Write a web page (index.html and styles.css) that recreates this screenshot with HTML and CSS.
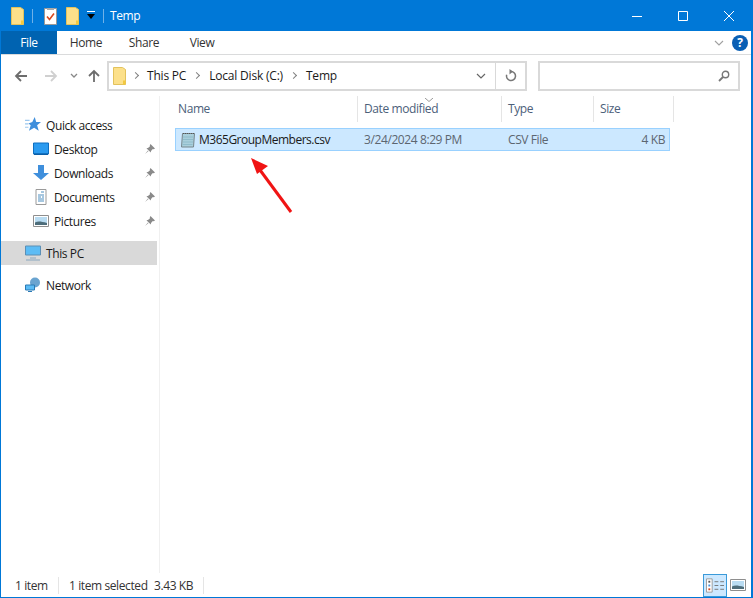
FILE: index.html
```html
<!DOCTYPE html>
<html lang="en">
<head>
  <meta charset="UTF-8">
  <title>Temp</title>
  <link rel="stylesheet" href="styles.css">
</head>
<body>
  <svg class="defs" width="0" height="0">
    <symbol id="folder" viewBox="0 0 13 18">
      <path d="M.5.5h9l3 2v15H.5z" fill="#fce08a" stroke="#e3c25c"/>
      <path d="M10 13.500h2.500v4H10z" fill="#f3c93f"/>
    </symbol>
    <symbol id="pin" viewBox="0 0 10 10">
      <path d="M5.500 0 10 4.500 8.800 5.200 7.800 5 6 7l-.2 1.600L1.400 4.200 3 4l2-1.800-.2-1z" fill="#8a8a8a"/>
      <path d="M3 6.500 0 10l3.500-3z" fill="#8a8a8a"/>
    </symbol>
    <symbol id="thumb" viewBox="0 0 16 12">
      <path d="M.5.500h15v11H.500z" fill="#fff" stroke="#8e8e8e"/>
      <path d="M2 2h12v8H2z" fill="#b9dcf2"/>
      <path d="M2 10V7.500C5 6 8 6.500 14 8v2z" fill="#4d6d7a"/>
    </symbol>
  </svg>

  <div class="window">
    <header class="titlebar">
      <svg class="qa-icon"><use href="#folder"/></svg>
      <span class="qa-sep"></span>
      <svg class="qa-icon" viewBox="0 0 13 18">
        <path d="M.5 1.500h12v16H.5z" fill="#fff" stroke="#999"/>
        <path d="M3 1h7v2H3z" fill="#aaa"/>
        <path d="M3 9.500l2.500 3 4.500-6" fill="none" stroke="#d8491f" stroke-width="1.600"/>
      </svg>
      <svg class="qa-icon qa-folder2"><use href="#folder"/></svg>
      <svg class="qa-drop" viewBox="0 0 8 9">
        <path d="M0 0h8v1H0z" fill="#fff"/>
        <path d="M0 3h8L4 8z" fill="#000"/>
      </svg>
      <span class="qa-sep qa-sep2"></span>
      <span class="window-title">Temp</span>
      <div class="caption">
        <svg viewBox="0 0 46 10" class="cap-btn"><path d="M18 5.500h10" stroke="#fff"/></svg>
        <svg viewBox="0 0 46 10" class="cap-btn"><path d="M18.500.5h9v9h-9z" stroke="#fff" fill="none"/></svg>
        <svg viewBox="0 0 46 10" class="cap-btn"><path d="M18 0l10 10M28 0L18 10" stroke="#fff" fill="none"/></svg>
      </div>
    </header>

    <nav class="ribbon">
      <span class="tab tab-file">File</span>
      <span class="tab">Home</span>
      <span class="tab">Share</span>
      <span class="tab">View</span>
      <svg class="ribbon-chev" viewBox="0 0 10 6"><path d="M1 1l4 4 4-4" fill="none" stroke="#a0a0a0" stroke-width="1.100"/></svg>
      <span class="help">?</span>
    </nav>

    <div class="addressrow">
      <svg class="nav-btn" viewBox="0 0 14 14"><path d="M13 7H2M7 2L2 7l5 5" fill="none" stroke="#6d6d6d" stroke-width="1.800"/></svg>
      <svg class="nav-btn nav-fwd" viewBox="0 0 14 14"><path d="M1 7h11M7 2l5 5-5 5" fill="none" stroke="#d0d0d0" stroke-width="1.800"/></svg>
      <svg class="nav-recent" viewBox="0 0 8 5"><path d="M1 1l3 3 3-3" fill="none" stroke="#888" stroke-width="1.300"/></svg>
      <svg class="nav-btn nav-up" viewBox="0 0 14 14"><path d="M7 13V2M2 7l5-5 5 5" fill="none" stroke="#6d6d6d" stroke-width="1.800"/></svg>

      <div class="addressbox">
        <svg class="crumb-folder"><use href="#folder"/></svg>
        <span class="crumb-sep"></span>
        <span>This PC</span>
        <span class="crumb-sep"></span>
        <span>Local Disk (C:)</span>
        <span class="crumb-sep"></span>
        <span>Temp</span>
        <svg class="addr-chev" viewBox="0 0 10 6"><path d="M1 1l4 4 4-4" fill="none" stroke="#666" stroke-width="1.200"/></svg>
        <span class="addr-div"></span>
        <svg class="addr-refresh" viewBox="0 0 12 13"><path d="M6 2.500a4.500 4.500 0 1 1-4.300 3.200" fill="none" stroke="#777" stroke-width="1.500"/><path d="M4.500 0v5.500L8 2.500z" fill="#777"/></svg>
      </div>

      <div class="searchbox">
        <svg viewBox="0 0 12 12"><circle cx="7.500" cy="4.500" r="3.200" fill="none" stroke="#777" stroke-width="1.400"/><path d="M5 7l-4 4" stroke="#777" stroke-width="1.800"/></svg>
      </div>
    </div>

    <div class="content">
      <aside class="tree">
        <div class="tree-row tree-root">
          <svg class="tree-icon" viewBox="0 0 14 14"><path d="M8.500 0l1.300 4.300H14l-3.400 2.900L12 12 8 9.300 3.500 12l1.500-4.800-2-1.600 3.400-1.300z" fill="#3f8fdc"/><path d="M0 3h4M0 6h3M0 9h3" stroke="#9cc7ee"/></svg>
          <span>Quick access</span>
        </div>
        <div class="tree-row tree-child">
          <svg class="tree-icon" viewBox="0 0 16 13"><path d="M.5.500h15v11H.5z" fill="#2b9bf0" stroke="#0f6fc0"/><path d="M1 11h14v1.500H1z" fill="#0a5ea8"/></svg>
          <span>Desktop</span>
          <svg class="pin"><use href="#pin"/></svg>
        </div>
        <div class="tree-row tree-child">
          <svg class="tree-icon" viewBox="0 0 16 16"><path d="M5 0h6v8h5l-8 7-8-7h5z" fill="#3f8fdc"/></svg>
          <span>Downloads</span>
          <svg class="pin"><use href="#pin"/></svg>
        </div>
        <div class="tree-row tree-child">
          <svg class="tree-icon" viewBox="0 0 16 16"><path d="M3 .5h10v15H3z" fill="#fff" stroke="#9a9a9a"/><path d="M8 3h3M5 6h6M5 8h3M9 8h2M5 10h6M5 12h6" stroke="#4f8fc0"/></svg>
          <span>Documents</span>
          <svg class="pin"><use href="#pin"/></svg>
        </div>
        <div class="tree-row tree-child">
          <svg class="tree-icon"><use href="#thumb"/></svg>
          <span>Pictures</span>
          <svg class="pin"><use href="#pin"/></svg>
        </div>
        <div class="tree-row tree-root tree-selected">
          <svg class="tree-icon" viewBox="0 0 16 15"><path d="M.5.500h15v9H.5z" fill="#5cbcf5" stroke="#5b8fb5"/><path d="M5 12h6v1H5zM1 14h14v1H1z" fill="#8aa8bf"/></svg>
          <span>This PC</span>
        </div>
        <div class="tree-row tree-root tree-network">
          <svg class="tree-icon" viewBox="0 0 16 15"><circle cx="10" cy="5" r="5" fill="#6aa4d0"/><path d="M.5 7.500h9v5h-9z" fill="#5cbcf5" stroke="#2a7ab5"/><path d="M3 13.500h4v1H3z" fill="#2a7ab5"/></svg>
          <span>Network</span>
        </div>
      </aside>

      <main class="files">
        <div class="file-head">
          <span class="col-name">Name</span>
          <span class="col-date">Date modified
            <svg class="sort" viewBox="0 0 8 4"><path d="M0 0l4 3.500L8 0" fill="none" stroke="#9a9a9a"/></svg>
          </span>
          <span class="col-type">Type</span>
          <span class="col-size">Size</span>
        </div>
        <div class="file-row">
          <span class="file-name">
            <svg viewBox="0 0 16 16"><path d="M2.500 1.500h12l-1 13.500h-12z" fill="#a9cfdc" stroke="#77868c"/><path d="M3 1.500h11" stroke="#555" stroke-dasharray="1 1"/><path d="M3 5h10M3 7.500h10M3 10h10M2.500 12.500h10" stroke="#8fbccb"/></svg>
            <span class="file-label">M365GroupMembers.csv</span>
          </span>
          <span class="file-date">3/24/2024 8:29 PM</span>
          <span class="file-type">CSV File</span>
          <span class="file-size">4 KB</span>
        </div>
      </main>

      <svg class="arrow" viewBox="0 0 50 66">
        <path d="M43 60L12 18" stroke="#f01414" stroke-width="3" fill="none"/>
        <path d="M3 6l17 8-11 8z" fill="#f01414"/>
      </svg>
    </div>

    <footer class="statusbar">
      <span class="status-count">1 item</span>
      <span class="status-sel">1 item selected</span>
      <span class="status-size">3.43 KB</span>
      <div class="views">
        <span class="view view-on">
          <svg viewBox="0 0 19 15"><path d="M.5.5h6v14h-6z" fill="#fff" stroke="#999"/><path d="M2.500 2.500h2v2h-2z" fill="#555"/><path d="M2.500 6.500h2v2h-2z" fill="#3f8fdc"/><path d="M2.500 10.500h2v2h-2z" fill="#d8491f"/><path d="M9 3.500h4M15 3.500h4M9 7.500h4M15 7.500h4M9 11.500h4M15 11.500h4" stroke="#777"/></svg>
        </span>
        <svg class="view-thumb"><use href="#thumb"/></svg>
      </div>
    </footer>
  </div>
</body>
</html>
```

FILE: styles.css
```css
* {
  box-sizing: border-box;
}

body {
  margin: 0;
  font-family: "Open Sans", "Noto Sans", Arial, sans-serif;
  font-size: 12px;
  letter-spacing: -0.4px;
  color: #1a1a1a;
  background-color: white;
}

.defs {
  position: absolute;
}

.window {
  position: relative;
  display: flex;
  flex-direction: column;
  height: 100vh;
  border: 1px solid #0078d7;
  border-top: none;
  border-right-width: 2px;
}

/* title bar */
.titlebar {
  display: flex;
  align-items: center;
  flex: none;
  height: 31px;
  margin: 0 -2px 0 -1px;
  padding-left: 11px;
  background-color: #0078d7;
  color: white;
}

.qa-icon {
  width: 13px;
  height: 18px;
  flex: none;
}

.qa-sep {
  width: 1px;
  height: 14px;
  margin: 0 11px 0 8px;
  background-color: #6fb1e8;
}

.qa-folder2 {
  margin-left: 9px;
}

.qa-drop {
  width: 8px;
  height: 9px;
  margin-left: 8px;
}

.qa-sep2 {
  margin: 0 6px 0 8px;
}

.window-title {
  font-size: 12px;
}

.caption {
  display: flex;
  margin-left: auto;
  margin-right: 1px;
}

.cap-btn {
  width: 46px;
  height: 10px;
}

/* ribbon */
.ribbon {
  display: flex;
  align-items: center;
  flex: none;
  height: 24px;
  border-bottom: 1px solid #dadbdc;
}

.tab {
  width: 58px;
  text-align: center;
  color: #333;
}

.tab-file {
  align-self: stretch;
  width: 56px;
  line-height: 23px;
  background-color: #0063b1;
  color: white;
}

.ribbon-chev {
  width: 10px;
  height: 6px;
  margin-left: auto;
}

.help {
  width: 16px;
  height: 16px;
  margin: 0 3px 0 8px;
  border-radius: 50%;
  background-color: #0a5fb4;
  color: white;
  font-weight: bold;
  font-size: 12px;
  line-height: 16px;
  text-align: center;
}

/* address row */
.addressrow {
  display: flex;
  align-items: center;
  flex: none;
  height: 41px;
  padding-left: 13px;
}

.nav-btn {
  width: 14px;
  height: 14px;
  flex: none;
}

.nav-fwd {
  margin-left: 16px;
}

.nav-recent {
  width: 8px;
  height: 5px;
  margin-left: 12px;
  flex: none;
}

.nav-up {
  margin-left: 9px;
}

.addressbox {
  display: flex;
  align-items: center;
  width: 420px;
  height: 30px;
  margin-left: 6px;
  padding-left: 4px;
  border: 2px solid #d9d9d9;
  color: #1a1a1a;
  letter-spacing: -0.2px;
  white-space: nowrap;
}

.crumb-folder {
  width: 13px;
  height: 18px;
  flex: none;
}

.crumb-sep {
  width: 5px;
  height: 5px;
  margin: 0 10px 0 8px;
  border-top: 1.500px solid #808080;
  border-right: 1.500px solid #808080;
  transform: rotate(45deg);
  flex: none;
}

.crumb-folder + .crumb-sep {
  margin: 0 9px 0 7px;
}

.addr-chev {
  width: 10px;
  height: 6px;
  margin-left: auto;
  flex: none;
}

.addr-div {
  width: 1px;
  height: 26px;
  margin: 0 9px;
  background-color: #d9d9d9;
}

.addr-refresh {
  width: 12px;
  height: 13px;
  margin-right: 8px;
  flex: none;
}

.searchbox {
  display: flex;
  align-items: center;
  justify-content: flex-end;
  width: 202px;
  height: 30px;
  margin-left: 11px;
  padding-right: 8px;
  border: 2px solid #d9d9d9;
}

.searchbox svg {
  width: 12px;
  height: 12px;
}

/* main area */
.content {
  position: relative;
  display: flex;
  flex: 1;
  min-height: 0;
}

.tree {
  flex: none;
  width: 158px;
  padding-top: 17px;
  border-right: 1px solid #f0f0f0;
  box-sizing: content-box;
}

.tree-row {
  display: flex;
  align-items: center;
  width: 156px;
  height: 24px;
  color: #1a1a1a;
}

.tree-root {
  padding-left: 24px;
}

.tree-child {
  padding-left: 32px;
}

.tree-icon {
  width: 16px;
  height: 16px;
  margin-right: 5px;
  flex: none;
}

.tree-selected {
  margin-top: 8px;
  background-color: #d9d9d9;
}

.tree-network {
  margin-top: 8px;
}

.pin {
  width: 10px;
  height: 10px;
  margin-left: auto;
  margin-right: 2px;
}

.files {
  flex: 1;
  min-width: 0;
  color: #5b6b7b;
}

.file-head {
  display: grid;
  grid-template-columns: 186px 144px 92px 80px;
  height: 26px;
  margin-left: 12px;
}

.file-head span {
  position: relative;
  padding-left: 6px;
  line-height: 26px;
  color: #4c607a;
  border-right: 1px solid #e5e5e5;
}

.sort {
  position: absolute;
  top: 2px;
  left: 67px;
  width: 8px;
  height: 4px;
}

.file-row {
  display: grid;
  grid-template-columns: 182px 144px 92px 72px;
  align-items: center;
  width: 495px;
  height: 23px;
  margin-top: 6px;
  margin-left: 15px;
  background-color: #cce8ff;
  border: 1px solid #99d1ff;
  color: #5c6670;
}

.file-name {
  display: flex;
  align-items: center;
  gap: 3px;
  padding-left: 4px;
  color: #1a1a1a;
  white-space: nowrap;
}

.file-name svg {
  width: 16px;
  height: 16px;
  flex: none;
}

.file-label {
  letter-spacing: -0.5px;
}

.file-date,
.file-type {
  padding-left: 6px;
  white-space: nowrap;
}

.file-size {
  text-align: right;
  padding-right: 1px;
}

.arrow {
  position: absolute;
  left: 247px;
  top: 56px;
  width: 50px;
  height: 66px;
}

/* status bar */
.statusbar {
  display: flex;
  align-items: center;
  flex: none;
  height: 24px;
  padding-left: 14px;
  color: #333;
}

.status-count {
  width: 44px;
  margin-right: 10px;
  border-right: 1px solid #e5e5e5;
}

.status-sel {
  width: 85px;
  white-space: nowrap;
}

.status-size {
  width: 50px;
  border-right: 1px solid #e5e5e5;
}

.views {
  display: flex;
  align-items: center;
  gap: 3px;
  margin-left: auto;
  margin-right: 5px;
}

.view {
  display: flex;
  align-items: center;
  justify-content: center;
  width: 24px;
  height: 23px;
}

.view-on {
  background-color: #cce8ff;
  border: 1px solid #3a9ad9;
}

.view svg {
  width: 18px;
  height: 15px;
}

.view-thumb {
  width: 16px;
  height: 12px;
}
```
